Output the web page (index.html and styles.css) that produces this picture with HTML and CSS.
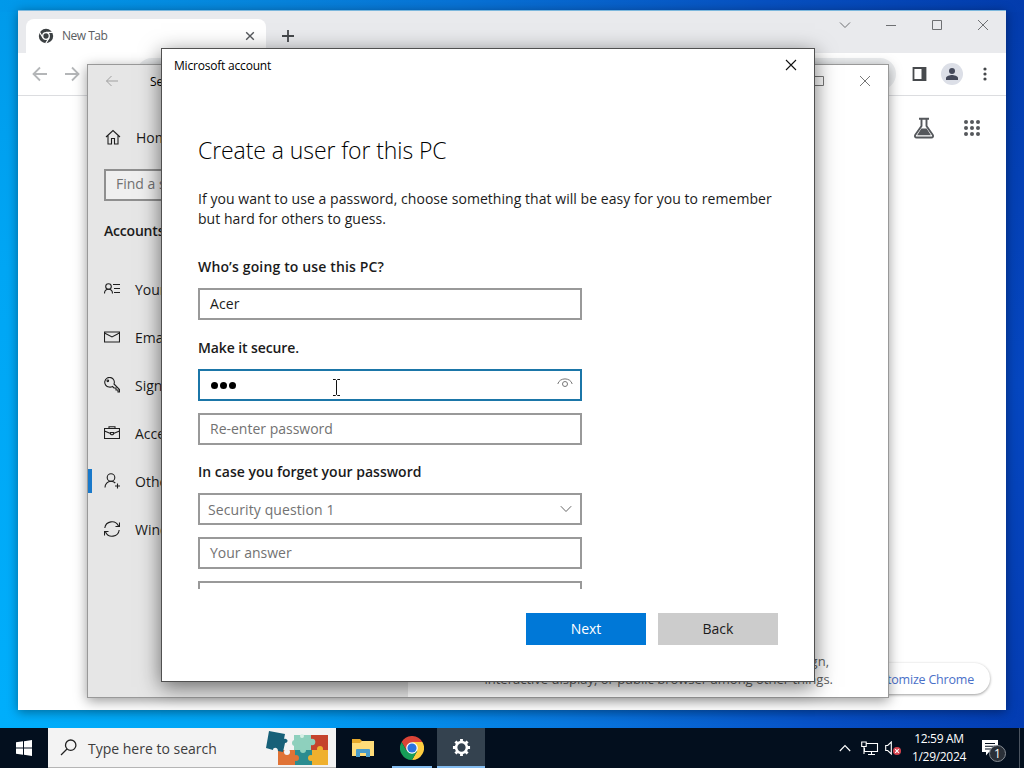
FILE: index.html
```
<!DOCTYPE html>
<html lang="en">
  <head>
    <meta charset="UTF-8" />
    <meta name="viewport" content="width=device-width, initial-scale=1.0" />
    <title>Desktop</title>
    <link rel="stylesheet" href="styles.css">
  </head>
  <body>
    <div class="desktop">
      <!-- Chrome -->
      <div class="window chrome">
        <div class="tab-strip">
          <div class="tab">
            <svg class="tab-icon" viewBox="0 0 16 16">
              <circle cx="8" cy="8" r="7.2" fill="#3c4043" />
              <circle cx="8" cy="8" r="3.3" fill="#3c4043" stroke="#fff" stroke-width="1.3" />
              <path d="M8 4.4h7M4.9 9.8L1.5 4M11.1 9.8L7.6 15.6" stroke="#fff" stroke-width="1.2" />
            </svg>
            <span class="tab-title">New Tab</span>
            <svg class="tab-close" viewBox="0 0 10 10"><path d="M1.2 1.2l7.6 7.6M8.8 1.2L1.2 8.8" /></svg>
          </div>
          <svg class="new-tab" viewBox="0 0 14 14"><path d="M7 1v12M1 7h12" /></svg>
          <div class="window-controls">
            <svg viewBox="0 0 12 12"><path d="M1 3.5l5 5 5-5" /></svg>
            <svg viewBox="0 0 12 12"><path d="M1 6.5h10" /></svg>
            <svg viewBox="0 0 12 12"><path d="M1.5 1.5h9v9h-9z" /></svg>
            <svg viewBox="0 0 12 12"><path d="M1 1l10 10M11 1L1 11" /></svg>
          </div>
        </div>
        <div class="toolbar">
          <svg class="nav-icon" viewBox="0 0 16 16"><path d="M15 8H2M8 1.5L1.5 8 8 14.5" /></svg>
          <svg class="nav-icon" viewBox="0 0 16 16"><path d="M1 8h13M8 1.5L14.5 8 8 14.5" /></svg>
          <div class="address-bar"></div>
          <svg class="side-panel" viewBox="0 0 14 14">
            <path d="M1 1h12v12H1z" fill="#fff" stroke="#474a4d" stroke-width="1.8" />
            <path d="M9 1h4v12H9z" fill="#474a4d" />
          </svg>
          <div class="avatar">
            <svg viewBox="0 0 14 14"><circle cx="7" cy="4" r="3" /><path d="M1 13v-2c0-2 4-3 6-3s6 1 6 3v2z" /></svg>
          </div>
          <svg class="menu-dots" viewBox="0 0 4 14"><circle cx="2" cy="2" r="1.6" /><circle cx="2" cy="7" r="1.6" /><circle cx="2" cy="12" r="1.6" /></svg>
        </div>
        <div class="new-tab-page">
          <div class="ntp-links">
            <span>Images</span>
            <svg class="labs" viewBox="0 0 22 22">
              <path d="M6 1.8h10M8.500 2v7L2.200 18c-.8 1.300 0 2.500 1.400 2.500h14.800c1.400 0 2.200-1.200 1.400-2.500L13.500 9V2" fill="none" stroke="#55585c" stroke-width="1.9" />
              <path d="M8.300 11.500h5.400l4.200 6.700H4.100z" fill="#55585c" />
            </svg>
            <div class="apps">
              <i></i><i></i><i></i><i></i><i></i><i></i><i></i><i></i><i></i>
            </div>
          </div>
          <button class="customize">Customize Chrome</button>
        </div>
      </div>

      <!-- Settings -->
      <div class="window settings">
        <div class="sidebar">
          <div class="sidebar-title">
            <svg viewBox="0 0 14 14"><path d="M13 7H1.500M6.500 2l-5 5 5 5" /></svg>
            <span>Settings</span>
          </div>
          <div class="home">
            <svg viewBox="0 0 16 16"><path d="M1 8l7-6.500L15 8M3 6.500V15h3.500V9.500h3V15H13V6.500" /></svg>
            <span>Home</span>
          </div>
          <div class="find">Find a setting</div>
          <h2>Accounts</h2>
          <ul>
            <li>
              <svg viewBox="0 0 16 16"><circle cx="4.500" cy="5.500" r="2.800" /><path d="M.5 12.500c0-2.500 1.800-4.200 4-4.200s4 1.700 4 4.200M9 3.500h7M10 7.500h6M10 11.500h6" /></svg>
              <span>Your info</span>
            </li>
            <li>
              <svg viewBox="0 0 16 16"><path d="M.5 3h15v10H.5zM.5 4L8 8l7.500-4" /></svg>
              <span>Email &amp; accounts</span>
            </li>
            <li>
              <svg viewBox="0 0 16 16"><path d="M8.500 9.500L10 11h2v2h2v2h1.500v-2.500L10 7a4.800 4.800 0 1 0-5 3c1.500.3 2.500 0 3.500-.5z" /><circle cx="3.800" cy="3.800" r=".8" /></svg>
              <span>Sign-in options</span>
            </li>
            <li>
              <svg viewBox="0 0 16 16"><path d="M.5 3.500h15v10H.5zM5 3.500V1.800h6v1.700M.5 6l6 2.500M15.500 6l-6 2.500M6.500 7.500h3V9c-1 1-2 1-3 0z" /></svg>
              <span>Access work or school</span>
            </li>
            <li class="active">
              <svg viewBox="0 0 16 16"><circle cx="7" cy="4.500" r="3.800" /><path d="M1 14.500c0-3.500 2.500-6.200 6-6.200 1.800 0 3.300.7 4.300 1.700M13.500 10.500v5M11 13h5" /></svg>
              <span>Other users</span>
            </li>
            <li>
              <svg viewBox="0 0 16 16"><path d="M.8 7A7.200 7.200 0 0 1 14.500 5M15.500 1.500V5.500h-4M15.200 9A7.200 7.200 0 0 1 1.500 11M.5 14.500v-4h4" /></svg>
              <span>Windows backup</span>
            </li>
          </ul>
        </div>
        <div class="settings-main">
          <div class="settings-controls">
            <svg viewBox="0 0 12 12"><path d="M1.500 1.500h9v9h-9z" /></svg>
            <svg viewBox="0 0 12 12"><path d="M1 1l10 10M11 1L1 11" /></svg>
          </div>
          <p class="kiosk"><span>Turn this device into a kiosk to use as a digital sign,</span><br>interactive display, or public browser among other things.</p>
        </div>
      </div>

      <!-- Create user dialog -->
      <div class="window dialog">
        <div class="dialog-title">
          <span>Microsoft account</span>
          <svg viewBox="0 0 12 12"><path d="M1 1l10 10M11 1L1 11" /></svg>
        </div>
        <form class="dialog-body">
          <h1>Create a user for this PC</h1>
          <p>If you want to use a password, choose something that will be easy for you to remember<br>but hard for others to guess.</p>
          <label class="who">Who’s going to use this PC?</label>
          <div class="field value">Acer</div>
          <label class="secure">Make it secure.</label>
          <div class="field focused">
            <span class="dots"><i></i><i></i><i></i></span>
            <svg class="reveal" viewBox="0 0 16 10"><path d="M.8 6C2.500-.8 13.500-.8 15.200 6" /><circle cx="8" cy="6" r="2.500" /></svg>
          </div>
          <div class="field">Re-enter password</div>
          <label class="forget">In case you forget your password</label>
          <div class="field select">
            <span>Security question 1</span>
            <svg viewBox="0 0 12 8"><path d="M.8 1.200L6 6.500l5.200-5.300" /></svg>
          </div>
          <div class="field">Your answer</div>
          <div class="field"></div>
        </form>
        <div class="dialog-footer">
          <button class="btn btn-next">Next</button>
          <button class="btn btn-back">Back</button>
        </div>
      </div>

      <svg class="cursor" viewBox="0 0 9 17"><path d="M1 .5h2.500l1 1 1-1H8M4.500 1.500v14M1 16.500h2.500l1-1 1 1H8" /></svg>

      <div class="taskbar">
        <div class="start">
          <svg viewBox="0 0 16 16"><path d="M0 2.300L7 1.300v6.300H0zM8 1.200L16 0v7.600H8zM0 8.500h7v6.300l-7-1zM8 8.500h8V16l-8-1.200z" /></svg>
        </div>
        <div class="search">
          <svg class="search-icon" viewBox="0 0 17 17"><circle cx="10.700" cy="6.200" r="5.200" /><path d="M7 10L1 16" /></svg>
          <span>Type here to search</span>
          <svg class="puzzle" viewBox="0 0 64 38">
            <path d="M28 6h17v15H28z" fill="#8ed0bd" />
            <path d="M45 6h17v15H45z" fill="#c5432d" />
            <path d="M12 21h17v15H12z" fill="#e07336" />
            <path d="M29 21h17v15H29z" fill="#2b8c90" />
            <path d="M46 21h16v15H46z" fill="#efb02e" />
            <path d="M3 2l16 3-1 5c4-1 5 4 1 4l-2 9-5-1c0-4-5-4-5-1l-7-2z" fill="#176078" />
            <circle cx="46" cy="13" r="3.300" fill="#8ed0bd" />
            <circle cx="29" cy="14" r="3" fill="#8ed0bd" />
            <circle cx="37" cy="21" r="3" fill="#8ed0bd" />
            <circle cx="54" cy="20" r="3" fill="#efb02e" />
            <circle cx="30" cy="29" r="3" fill="#e07336" />
            <circle cx="45" cy="29" r="3" fill="#efb02e" />
            <circle cx="21" cy="23" r="3" fill="#f3f3f3" />
            <circle cx="36" cy="7" r="2" fill="#d7efe5" />
          </svg>
        </div>
        <div class="task">
          <svg class="folder" viewBox="0 0 22 18">
            <path d="M0 0h8l2 2h11v15H0z" fill="#e6a92c" />
            <path d="M0 4h8l2-2h12v15H0z" fill="#ffdc79" />
            <path d="M4 18v-7q0-1 1-1h12q1 0 1 1v7h-4v-4H8v4z" fill="#499ccb" />
          </svg>
        </div>
        <div class="task open">
          <svg class="chrome-logo" viewBox="0 0 24 24">
            <path d="M12 6h10.400A12 12 0 0 0 1.600 6l5.200 9z" fill="#db4437" />
            <path d="M12 6h10.400A12 12 0 0 1 12 24l5.200-9z" fill="#ffcd40" />
            <path d="M6.800 15L1.600 6A12 12 0 0 0 12 24l5.200-9z" fill="#179d58" />
            <circle cx="12" cy="12" r="5.800" fill="#fff" />
            <circle cx="12" cy="12" r="4.600" fill="#2b73e0" />
          </svg>
        </div>
        <div class="task open current">
          <svg class="gear" viewBox="0 0 20 20">
            <circle cx="10" cy="10" r="5.700" fill="none" stroke="#fff" stroke-width="2.700" />
            <path d="M10 1v3M10 16v3M1 10h3M16 10h3M3.600 3.600l2.200 2.200M14.200 14.200l2.200 2.200M16.400 3.600l-2.200 2.200M5.800 14.200l-2.200 2.200" stroke="#fff" stroke-width="3" />
          </svg>
        </div>
        <div class="tray">
          <svg class="tray-up" viewBox="0 0 12 8"><path d="M.8 7L6 1.500 11.200 7" /></svg>
          <svg class="tray-net" viewBox="0 0 18 15"><path d="M5 2.500h11.500v8H3.500V7M.7 1h4.500v4.500H.7zM3 5.500v7.500M10.500 10.500v3M7 13.500h7" /></svg>
          <svg class="tray-sound" viewBox="0 0 16 15">
            <path d="M.7 4.500h2L6.300 1v12L2.700 9.500h-2z" />
            <circle cx="12" cy="10" r="4" fill="#d6424d" stroke="none" />
            <path d="M10.200 8.200l3.600 3.600M13.800 8.200l-3.600 3.600" />
          </svg>
          <div class="clock">12:59 AM<br>1/29/2024</div>
          <div class="notify">
            <svg viewBox="0 0 16 16"><path d="M0 0h16v12H7l-3 3.500V12H0z" fill="#fff" /><path d="M3 3.500h10M3 6.200h10M3 9h6" stroke="#030f1e" /></svg>
            <span class="badge">1</span>
          </div>
          <div class="show-desktop"></div>
        </div>
      </div>
    </div>
  </body>
</html>
```
FILE: styles.css
```
* {
  margin: 0;
  padding: 0;
  box-sizing: border-box;
}
body {
  font-family: "Open Sans", "Noto Sans", sans-serif;
  font-size: 14px;
  color: #1b1b1b;
}
svg {
  display: block;
  flex: none;
  fill: none;
}
button {
  font: inherit;
  border: none;
}
.desktop {
  position: relative;
  width: 1024px;
  height: 768px;
  overflow: hidden;
  background:
    linear-gradient(90deg, #00aefb 0%, #00a3f4 25%, #0878df 55%, #0750c6 80%, #033cb2 100%) 0 700px / 100% 28px no-repeat,
    linear-gradient(90deg, #0099ea 0%, #0785dc 25%, #0872d5 45%, #0750c0 75%, #033cad 100%) 0 0 / 100% 12px no-repeat,
    linear-gradient(180deg, #009aea 0%, #00a6f4 35%, #00affc 100%) 0 0 / 100px 100% no-repeat,
    linear-gradient(180deg, #033bab 0%, #0546bf 50%, #053bb0 100%);
}
.window {
  position: absolute;
  overflow: hidden;
}

/* Chrome */
.chrome {
  left: 18px;
  top: 10px;
  width: 988px;
  height: 700px;
  background: #fff;
  border-top: 1px solid #7db8dd;
  box-shadow: 0 2px 10px rgba(0, 0, 0, 0.4);
  display: flex;
  flex-direction: column;
}
.tab-strip {
  height: 42px;
  background: #e9eaed;
  display: flex;
  align-items: flex-start;
  padding-left: 8px;
}
.tab {
  width: 240px;
  height: 34px;
  margin-top: 8px;
  background: #fff;
  border-radius: 8px 8px 0 0;
  display: flex;
  align-items: center;
  padding: 0 11px 0 12px;
}
.tab-icon {
  width: 16px;
  height: 16px;
  margin-right: 8px;
}
.tab-title {
  flex: 1;
  padding-bottom: 1px;
  font-size: 12px;
  letter-spacing: -0.5px;
  color: #5a5d61;
}
.tab-close {
  width: 10px;
  height: 10px;
  stroke: #55585c;
  stroke-width: 1.4;
}
.new-tab {
  width: 14px;
  height: 14px;
  margin: 18px 0 0 15px;
  stroke: #45484b;
  stroke-width: 1.8;
}
.window-controls {
  display: flex;
  gap: 34px;
  margin: 8px 17px 0 auto;
}
.window-controls svg {
  width: 12px;
  height: 12px;
  stroke: #6e7073;
}
.toolbar {
  height: 43px;
  border-bottom: 1px solid #dcdde0;
  display: flex;
  align-items: center;
  padding: 0 18px 0 14px;
}
.nav-icon {
  width: 16px;
  height: 16px;
  margin-right: 16px;
  stroke: #b4b6b8;
  stroke-width: 1.8;
}
.address-bar {
  flex: 1;
  height: 32px;
  margin: 0 16px 0 40px;
  border-radius: 16px;
  background: #eceef0;
}
.side-panel {
  width: 15px;
  height: 14px;
}
.avatar {
  width: 22px;
  height: 22px;
  margin: 0 20px 0 14px;
  border-radius: 50%;
  background: #dcdfe7;
  display: flex;
  align-items: center;
  justify-content: center;
}
.avatar svg {
  width: 14px;
  height: 14px;
  fill: #44495a;
}
.menu-dots {
  width: 4px;
  height: 14px;
  margin-right: 1px;
  fill: #45484b;
}
.new-tab-page {
  flex: 1;
  display: flex;
  flex-direction: column;
  justify-content: space-between;
  align-items: flex-end;
  padding: 21px 16px 16px 0;
}
.ntp-links {
  display: flex;
  align-items: center;
  padding-right: 10px;
  font-size: 13px;
}
.labs {
  width: 22px;
  height: 22px;
  margin: 0 29px 0 24px;
}
.apps {
  display: grid;
  grid-template-columns: repeat(3, 4px);
  gap: 2px;
}
.apps i {
  width: 4px;
  height: 4px;
  border-radius: 50%;
  background: #55585c;
}
.customize {
  width: 150px;
  height: 31px;
  padding: 1px 16px 0 0;
  border-radius: 16px;
  background: #fff;
  color: #4a70c8;
  font-size: 12.5px;
  letter-spacing: -0.2px;
  text-align: right;
  white-space: nowrap;
  box-shadow: 0 1px 3px rgba(0, 0, 0, 0.4);
}

/* Settings */
.settings {
  left: 87px;
  top: 64px;
  width: 802px;
  height: 634px;
  border: 1px solid #999;
  background: #fff;
  box-shadow: 0 3px 12px rgba(0, 0, 0, 0.4);
  display: flex;
}
.sidebar {
  width: 320px;
  background: #e6e6e6;
}
.sidebar-title {
  display: flex;
  align-items: center;
  height: 32px;
  padding-left: 17px;
  font-size: 12px;
  color: #000;
}
.sidebar-title svg {
  width: 14px;
  height: 14px;
  margin-right: 31px;
  stroke: #a0a0a0;
}
.home {
  display: flex;
  align-items: center;
  height: 48px;
  margin-top: 17px;
  padding-left: 17px;
}
.sidebar li svg,
.home svg {
  width: 16px;
  height: 16px;
  margin-right: 15px;
  stroke: #1f1f1f;
  stroke-width: 1.1;
}
.home svg {
  margin-bottom: 2px;
}
.home span {
  padding-bottom: 1px;
}
.find {
  width: 288px;
  height: 32px;
  margin: 7px 16px 0;
  padding-left: 10px;
  border: 2px solid #8f8f8f;
  line-height: 26px;
  background: #efefef;
  color: #717171;
}
.sidebar h2 {
  margin: 20px 16px 0;
  font-size: 14px;
  line-height: 20px;
  font-weight: 600;
  letter-spacing: -0.2px;
}
.sidebar ul {
  margin-top: 24px;
  list-style: none;
}
.sidebar li {
  display: flex;
  align-items: center;
  height: 48px;
  padding-left: 16px;
}
.sidebar li span {
  padding-top: 1px;
}
.sidebar li.active {
  background: linear-gradient(#1979ca, #1979ca) 0 50% / 4px 24px no-repeat;
}
.settings-main {
  flex: 1;
  display: flex;
  flex-direction: column;
  justify-content: space-between;
  align-items: flex-end;
}
.settings-controls {
  display: flex;
  gap: 34px;
  padding: 10px 17px 0 0;
}
.settings-controls svg {
  width: 12px;
  height: 12px;
  stroke: #777;
}
.kiosk {
  margin: 0 55px 9px 0;
  font-size: 13px;
  line-height: 18px;
  color: #5f5f5f;
  text-align: right;
  white-space: nowrap;
}
.kiosk span {
  padding-right: 4px;
}

/* Dialog */
.dialog {
  left: 161px;
  top: 48px;
  width: 654px;
  height: 634px;
  border: 1px solid #505050;
  background: #fff;
  box-shadow: 0 5px 20px rgba(0, 0, 0, 0.55);
}
.dialog-title {
  display: flex;
  align-items: center;
  justify-content: space-between;
  height: 32px;
  padding: 0 17px 0 12px;
  font-size: 12px;
  letter-spacing: -0.2px;
  color: #000;
}
.dialog-title svg {
  width: 12px;
  height: 12px;
  stroke: #111;
  stroke-width: 1.1;
}
.dialog-body {
  height: 508px;
  padding: 53px 0 0 36px;
  overflow: hidden;
}
.dialog-body h1 {
  font-size: 23px;
  font-weight: 300;
  line-height: 32px;
  letter-spacing: -0.08px;
  color: #000;
}
.dialog-body p {
  margin-top: 23px;
  line-height: 20px;
  letter-spacing: 0.05px;
  white-space: nowrap;
}
.dialog-body label {
  display: block;
  line-height: 20px;
  font-weight: 600;
  letter-spacing: 0;
}
.dialog-body .who {
  margin: 28px 0 11px;
  letter-spacing: 0.15px;
}
.dialog-body .secure {
  margin: 18px 0 11px;
  letter-spacing: -0.1px;
}
.dialog-body .forget {
  margin: 17px 0 11px;
}
.field {
  width: 384px;
  height: 32px;
  padding: 0 8px 0 10px;
  border: 2px solid #999;
  line-height: 28px;
  color: #727272;
}
.field + .field {
  margin-top: 12px;
}
.field.value {
  color: #1b1b1b;
  letter-spacing: 0.1px;
}
.field.focused {
  display: flex;
  align-items: center;
  justify-content: space-between;
  padding-right: 7px;
  border-color: #1b76a8;
}
.dots {
  display: flex;
  gap: 2px;
  padding: 1px 0 0 1px;
}
.dots i {
  width: 7px;
  height: 7px;
  border-radius: 50%;
  background: #000;
}
.reveal {
  width: 16px;
  height: 10px;
  margin-bottom: 5px;
  stroke: #777;
}
.field.select {
  display: flex;
  align-items: center;
  justify-content: space-between;
  padding-left: 8px;
}
.select span {
  padding-top: 1px;
  letter-spacing: 0.1px;
}
.select svg {
  width: 12px;
  height: 8px;
  stroke: #666;
}
.dialog-footer {
  display: flex;
  justify-content: flex-end;
  gap: 12px;
  padding: 24px 36px 0 0;
}
.btn {
  width: 120px;
  height: 32px;
  padding-bottom: 2px;
}
.btn-next {
  background: #0078d7;
  color: #fff;
}
.btn-back {
  background: #ccc;
  color: #1b1b1b;
}
.cursor {
  position: absolute;
  left: 332px;
  top: 379px;
  width: 9px;
  height: 17px;
  stroke: #111;
}

/* Taskbar */
.taskbar {
  position: absolute;
  left: 0;
  bottom: 0;
  width: 100%;
  height: 40px;
  background: #030f1e;
  display: flex;
}
.start {
  width: 48px;
  display: flex;
  align-items: center;
  justify-content: center;
}
.start svg {
  width: 16px;
  height: 16px;
  fill: #fff;
}
.search {
  width: 288px;
  background: #f3f3f3;
  border-bottom: 1px solid #b5b5b5;
  display: flex;
  align-items: center;
  padding: 0 6px 0 12px;
  color: #3d3d3d;
}
.search-icon {
  width: 17px;
  height: 17px;
  margin-right: 11px;
  stroke: #222;
  stroke-width: 1.3;
}
.search span {
  flex: 1;
  padding-top: 1px;
}
.puzzle {
  width: 64px;
  height: 38px;
}
.task {
  width: 48px;
  margin-left: 1px;
  display: flex;
  align-items: center;
  justify-content: center;
}
.task:nth-of-type(3) {
  width: 52px;
}
.task.open {
  border-bottom: 2px solid #83bcf0;
}
.task.current {
  margin-left: 0;
  background: #34424f;
}
.folder {
  width: 22px;
  height: 18px;
}
.chrome-logo {
  width: 24px;
  height: 24px;
  margin-top: 2px;
}
.task.open:nth-of-type(4) {
  width: 40px;
  margin-left: 3px;
  margin-right: 5px;
}
.gear {
  width: 19px;
  height: 19px;
  margin-top: 1px;
}
.tray {
  display: flex;
  align-items: center;
  margin-left: auto;
  color: #fff;
}
.tray svg {
  stroke: #fff;
  stroke-width: 1.1;
}
.tray-up {
  width: 12px;
  height: 8px;
  margin-right: 10px;
}
.tray-net {
  width: 18px;
  height: 15px;
  margin-right: 6px;
}
.tray-sound {
  width: 16px;
  height: 15px;
}
.clock {
  width: 75px;
  padding-left: 1px;
  font-size: 12px;
  line-height: 18px;
  letter-spacing: -0.3px;
  text-align: center;
}
.notify {
  position: relative;
  width: 24px;
  height: 24px;
  margin: 0 13px 0 6px;
  padding-top: 4px;
}
.notify svg {
  width: 16px;
  height: 16px;
  stroke: none;
}
.badge {
  position: absolute;
  left: 7px;
  top: 9px;
  width: 17px;
  height: 17px;
  border: 1px solid #858b93;
  border-radius: 50%;
  background: #2a3038;
  font-size: 12px;
  line-height: 15px;
  text-align: center;
}
.show-desktop {
  width: 5px;
  height: 40px;
  border-left: 1px solid #4b5460;
}
```
